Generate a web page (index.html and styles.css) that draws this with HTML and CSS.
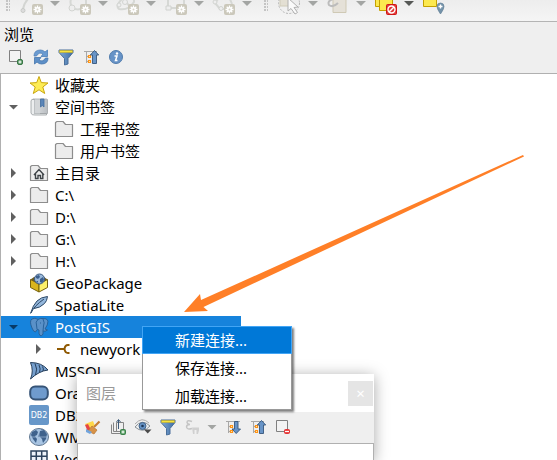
FILE: index.html
```html
<!DOCTYPE html>
<html lang="zh-CN">
<head>
<meta charset="utf-8">
<title>浏览</title>
<link rel="stylesheet" href="styles.css">
</head>
<body>
<svg class="defs" aria-hidden="true">
  <defs>
    <linearGradient id="blue" x1="0" x2="1"><stop offset="0" stop-color="#7fa9d6"/><stop offset="1" stop-color="#3f6da3"/></linearGradient>
    <linearGradient id="silver" x1="0" x2="1"><stop offset="0" stop-color="#e2e4e6"/><stop offset="1" stop-color="#b9bdc1"/></linearGradient>
  </defs>
  <symbol id="gear" viewBox="0 0 11 11"><rect width="11" height="11" rx="2" fill="#cbc8bb"/><path d="M5.500 1.500v8M1.500 5.500h8M2.700 2.700l5.600 5.600M8.300 2.700L2.700 8.300" stroke="#fff" stroke-width="1.300"/><circle cx="5.500" cy="5.500" r="2.500" fill="#fff"/><circle cx="5.500" cy="5.500" r="1" fill="#d8d5ca"/></symbol>
  <symbol id="folder" viewBox="0 0 20 20"><path d="M1.500 17.500V3.500L3 2.500h6l2.500 3H18.500v12z" fill="#ececec" stroke="#8d8d8d" stroke-width="1.200" stroke-linejoin="round"/></symbol>
  <symbol id="funnel" viewBox="0 0 20 20"><path d="M3 3h14v2.500l-5 6V17l-3.500 1v-6.500L3 5.500z" fill="url(#blue)" stroke="#4a6f9b"/><path d="M3.500 3.500h13v2h-13z" fill="#f7e43c" stroke="#c2ad2c" stroke-width=".6"/></symbol>
  <symbol id="collapse" viewBox="0 0 20 20"><path d="M3 4.500h13M5.500 4v12M6 9.500h2M6 14.500h2" fill="none" stroke="#a8a8a8"/><path d="M7.500 8.500h2v2h-2zM7.500 13.500h2v2h-2z" fill="#fff3d0" stroke="#ff9415" stroke-width="1.200"/><path d="M13.500 3.500L17.700 8H15.500V16.500h-4V8H9.300z" fill="#6894c7" stroke="#35567c" stroke-width=".9"/></symbol>
  <symbol id="expand" viewBox="0 0 20 20"><path d="M3 4.500h14M5.500 4v12M6 9.500h2M6 14.500h2" fill="none" stroke="#a8a8a8"/><path d="M7.500 8.500h2v2h-2zM7.500 13.500h2v2h-2z" fill="#fff3d0" stroke="#ff9415" stroke-width="1.200"/><path d="M11.500 4.500h3.500v7.500h2.500L13.200 16.500L9 12h2.500z" fill="#6894c7" stroke="#35567c" stroke-width=".9"/></symbol>
</svg>

<main class="app">
  <div class="top-tools" role="toolbar" aria-label="数字化">
    <span class="grip"></span>
    <button class="tool" aria-label="曲线"><svg class="tool-icon" viewBox="0 0 24 21"><path d="M8-1Q4 3 3 9" fill="none" stroke="#d3d5d2" stroke-width="2"/><circle cx="3" cy="10.500" r="2" fill="#ddd" stroke="#c8cac7"/><use href="#gear" x="12" y="4" width="11" height="11"/></svg><i class="caret"></i></button>
    <button class="tool" aria-label="圆"><svg class="tool-icon" viewBox="0 0 24 21"><path d="M3-1Q1 6 7 9Q14 11 18 4V-1" fill="none" stroke="#d6d8d5" stroke-width="2"/><circle cx="4" cy="8" r="3" fill="#eee" stroke="#d2d4d1"/><use href="#gear" x="12" y="4" width="11" height="11"/></svg><i class="caret"></i></button>
    <button class="tool" aria-label="椭圆"><svg class="tool-icon" viewBox="0 0 24 21"><path d="M6-1Q-1 6 3 9Q12 11 18 2V-1M8-1L14 7" fill="none" stroke="#d6d8d5" stroke-width="2"/><circle cx="3" cy="5" r="2" fill="#eee" stroke="#d2d4d1"/><circle cx="9" cy="2" r="2.500" fill="#eee" stroke="#d2d4d1"/><use href="#gear" x="12" y="4" width="11" height="11"/></svg><i class="caret"></i></button>
    <button class="tool" aria-label="矩形"><svg class="tool-icon" viewBox="0 0 24 21"><path d="M4-1V8H14M20-1V4" fill="none" stroke="#d6d8d5" stroke-width="2"/><path d="M2 6h5v4H2z" fill="#eee" stroke="#d0d2cf"/><use href="#gear" x="12" y="4" width="11" height="11"/></svg><i class="caret"></i></button>
    <button class="tool" aria-label="多边形"><svg class="tool-icon" viewBox="0 0 24 21"><path d="M6-1L3 3L8 9H14M18-1L20 4" fill="none" stroke="#d6d8d5" stroke-width="2"/><circle cx="3" cy="2" r="2" fill="#eee" stroke="#d2d4d1"/><circle cx="9" cy="8.500" r="2" fill="#eee" stroke="#d2d4d1"/><use href="#gear" x="12" y="4" width="11" height="11"/></svg><i class="caret"></i></button>
    <span class="grip grip-inner"></span>
    <button class="tool" aria-label="选择要素"><svg class="tool-icon" viewBox="0 0 24 21"><path d="M2-1H12V6H2z" fill="#e3dfd3" stroke="#d0ccb9"/><circle cx="11" cy="3" r="10.500" fill="none" stroke="#b5b5b5" stroke-dasharray="2 1.500"/><path d="M10-2V11l3-2.500L17 14l2.500-1.500L16 7.500l4-.5z" fill="#fafafa" stroke="#b0b0b0"/></svg><i class="caret"></i></button>
    <button class="tool" aria-label="按值选择"><svg class="tool-icon" viewBox="0 0 24 21"><path d="M7-1H20V12.500H7z" fill="#e5e1d8" stroke="#cfc9b5"/><path d="M7-1Q1 1 3 5Q7 8 12 3" fill="none" stroke="#bcbcbc" stroke-width="2"/></svg><i class="caret"></i></button>
    <button class="tool" aria-label="取消选择"><svg class="tool-icon" viewBox="0 0 24 21"><path d="M1.500-1H13V6.500H1.500z" fill="#fce94f" stroke="#c4a000"/><path d="M5.500-1H18.500V10.500H5.500z" fill="#fce94f" stroke="#c4a000"/><rect x="12.500" y="4.500" width="10" height="10" rx="1" fill="#e23a3a" stroke="#d01616"/><circle cx="17.500" cy="9.500" r="3.500" fill="none" stroke="#fff" stroke-width="1.400"/><path d="M15 12L20 7" stroke="#fff" stroke-width="1.400"/></svg><i class="caret caret-dark"></i></button>
    <button class="tool" aria-label="按位置选择"><svg class="tool-icon" viewBox="0 0 24 21"><path d="M1.500-1H14.500V6.500H1.500z" fill="#fce94f" stroke="#c4a000"/><path d="M18.500 14Q15 9 15 6.500A3.500 3.500 0 0 1 22 6.500Q22 9 18.500 14z" fill="#7493aa" stroke="#668399" stroke-width=".7"/><path d="M18.500 4.500v4M16.500 6.500h4" stroke="#fff" stroke-width="1.400"/></svg></button>
  </div>

  <section class="browser">
    <h1 class="dock-title">浏览</h1>
    <div class="dock-tools" role="toolbar" aria-label="浏览">
      <button aria-label="添加选中图层"><svg viewBox="0 0 20 20"><path d="M3.500 3.500h11v11h-11z" fill="#f3f3f3" stroke="#808080"/><rect x="11.500" y="12.500" width="5" height="5" rx="1.500" fill="#5a9a66" stroke="#397546"/><path d="M14 13.500v3M12.500 15h3" stroke="#fff"/></svg></button>
      <button aria-label="刷新"><svg viewBox="0 0 20 20"><path d="M3 9Q3 3 9.500 3Q12 3 14 5L16.500 3v6.500H10L12 7Q8 4.500 5.500 9z" fill="#6a9bd1" stroke="#4e7fb7" stroke-width=".8"/><path d="M17 11Q17 17 10.500 17Q8 17 6 15L3.500 17v-6.500H10L8 13Q12 15.500 14.500 11z" fill="#5d8fc7" stroke="#4475ac" stroke-width=".8"/></svg></button>
      <button aria-label="过滤浏览器"><svg><use href="#funnel"/></svg></button>
      <button aria-label="全部折叠"><svg><use href="#collapse"/></svg></button>
      <button aria-label="属性"><svg viewBox="0 0 20 20"><circle cx="10" cy="10" r="6.500" fill="#6793c7" stroke="#517cad"/><circle cx="11" cy="6.500" r="1.200" fill="#fff"/><path d="M8.500 9H11L9.500 13.500H11.500" fill="none" stroke="#fff" stroke-width="1.500"/></svg></button>
    </div>

    <ul class="tree">
      <li class="row"><span class="toggle"></span><svg class="icon" viewBox="0 0 20 20"><path d="M10 1.500L12.300 7.600L19 8L13.800 12L15.700 18.500L10 14.800L4.300 18.500L6.200 12L1 8L7.700 7.600z" fill="#fdec55" stroke="#c9a60e" stroke-linejoin="round"/></svg><span class="label">收藏夹</span></li>
      <li class="row"><button class="toggle open" aria-label="折叠"></button><svg class="icon" viewBox="0 0 20 20"><path d="M4 2H17.500Q19 2 18.500 4V16.500H4z" fill="url(#silver)" stroke="#a3a7aa" stroke-width=".8"/><path d="M5.500 2.500Q2 1.500 2 4V16Q2.500 18.500 6 18H17.500V16.500H5.500z" fill="#eceeef" stroke="#989ca0" stroke-width=".8"/><path d="M5.500 3H11V16.500H5.500z" fill="#d3d6d8"/><path d="M11.500 2H15V10L13.300 8.500L11.500 10z" fill="#5c86b8" stroke="#416c9f" stroke-width=".8"/></svg><span class="label">空间书签</span></li>
      <li class="row child"><span class="toggle"></span><svg class="icon"><use href="#folder"/></svg><span class="label">工程书签</span></li>
      <li class="row child"><span class="toggle"></span><svg class="icon"><use href="#folder"/></svg><span class="label">用户书签</span></li>
      <li class="row"><button class="toggle" aria-label="展开"></button><svg class="icon" viewBox="0 0 20 20"><use href="#folder"/><path d="M5 12L10 6.500L15 12M6.500 11V15.500H9V12.500H11.500V15.500H13.800V11" fill="none" stroke="#3e4347" stroke-width="1.400"/></svg><span class="label">主目录</span></li>
      <li class="row"><button class="toggle" aria-label="展开"></button><svg class="icon"><use href="#folder"/></svg><span class="label">C:\</span></li>
      <li class="row"><button class="toggle" aria-label="展开"></button><svg class="icon"><use href="#folder"/></svg><span class="label">D:\</span></li>
      <li class="row"><button class="toggle" aria-label="展开"></button><svg class="icon"><use href="#folder"/></svg><span class="label">G:\</span></li>
      <li class="row"><button class="toggle" aria-label="展开"></button><svg class="icon"><use href="#folder"/></svg><span class="label">H:\</span></li>
      <li class="row"><span class="toggle"></span><svg class="icon" viewBox="0 0 20 20"><path d="M1.500 6.500L10 11V19L1.500 14.500z" fill="#d9b51e" stroke="#77620d"/><path d="M18.500 6.500L10 11V19L18.500 14.500z" fill="#fdf06a" stroke="#77620d"/><path d="M1.500 6.500L5 4h10l3.500 2.500L10 11z" fill="#6d5b20"/><circle cx="10.500" cy="6" r="5" fill="#9bb9da" stroke="#3b5a80"/><path d="M7 3l3-1 1 2-2 2-2-1zM11 6l3-2 1 3-2 3-2-1zM7 8l2 0 0 2z" fill="#3b5f8d"/></svg><span class="label">GeoPackage</span></li>
      <li class="row"><span class="toggle"></span><svg class="icon" viewBox="0 0 20 20"><path d="M1.500 18.500Q4 10 8 6Q12 2 18.500 1.500Q18 6 15.500 8.500Q11 13 5 13.500" fill="#94b7dc" stroke="#2c4765"/><path d="M2 18Q5 11 15 4" fill="none" stroke="#2c4765"/></svg><span class="label">SpatiaLite</span></li>
      <li class="row selected"><button class="toggle open" aria-label="折叠"></button><svg class="icon" viewBox="0 0 20 20"><path d="M3 2Q6 0 9 2.500Q11 1 14 1.500Q18 1 19 4Q19 8 16 12L18.500 13Q16 15 14 14V17Q13 19.500 11 18.500Q9.500 17 10 13L8 12.500L6.500 15Q4.500 15 3 11Q0 4 3 2z" fill="#5a91c8" stroke="#28629b"/><path d="M9 2.500Q6 5 7.500 8L8 12M14 2Q16 6 14.500 9L14 14M11 6h1" fill="none" stroke="#28629b"/></svg><span class="label">PostGIS</span></li>
      <li class="row child"><button class="toggle" aria-label="展开"></button><svg class="icon" viewBox="0 0 20 20"><path d="M3 10H10M15.500 6H14Q11 6 10.500 10Q11 14 14 14H15.500" fill="none" stroke="#8f5902" stroke-width="2"/></svg><span class="label">newyork</span></li>
      <li class="row"><span class="toggle"></span><svg class="icon" viewBox="0 0 20 20"><path d="M1.500 1.500Q13 1.500 19 9Q10 10 1.500 18Q5 10 1.500 1.500z" fill="#769fcd" stroke="#263f5c"/><path d="M6 2.500Q9 8 6.500 14M10 4Q12 8 10.500 11.500M13.500 5.500Q15 8 14 10" fill="none" stroke="#263f5c"/></svg><span class="label">MSSQL</span></li>
      <li class="row"><span class="toggle"></span><svg class="icon" viewBox="0 0 20 20"><rect x="1.200" y="3.500" width="17.600" height="13" rx="5" fill="#6f9bcd" stroke="#365477" stroke-width="2"/></svg><span class="label">Oracle</span></li>
      <li class="row"><span class="toggle"></span><svg class="icon" viewBox="0 0 20 20"><rect width="20" height="20" rx="2" fill="#6797c9"/><text x="10" y="13" text-anchor="middle" class="db2">DB2</text></svg><span class="label">DB2</span></li>
      <li class="row"><span class="toggle"></span><svg class="icon" viewBox="0 0 20 20"><ellipse cx="10" cy="10" rx="9.500" ry="8.500" fill="#a9c5e3" stroke="#5f7690"/><path d="M3 5l4-2 2 2-1 3-2 1 2 3-1 4-3-4-2-4zM11 4l4-1 3 4-1 5-3 4-1-4-2-2-2 0zM12 2l2 0-1 1z" fill="#3f628c"/><path d="M1 10h18M10 2v16" stroke="#a3bdd8" stroke-width=".7"/></svg><span class="label">WMS/WMTS</span></li>
      <li class="row"><span class="toggle"></span><svg class="icon" viewBox="0 0 20 20"><path d="M2 2h16v16H2zM7.300 2v16M12.700 2v16M2 7.300h16M2 12.700h16" fill="#eef3fa" stroke="#2d435d" stroke-width="1.500"/></svg><span class="label">Vector Tiles</span></li>
    </ul>
  </section>

  <svg class="pointer" viewBox="0 0 342 160" aria-hidden="true"><path d="M0 157L16 139L17 145L339 0L340 1.500L19.500 152L24 156z" fill="#ff7f27"/></svg>

  <section class="layers">
    <header class="layers-head"><h2>图层</h2><button class="close" aria-label="关闭">×</button></header>
    <div class="dock-tools layers-tools" role="toolbar" aria-label="图层">
      <button aria-label="样式"><svg viewBox="0 0 20 20"><path d="M2 7l8-3 2 5-7 3z" fill="#ffd84a"/><path d="M2 8l3-1 3 6-3 2z" fill="#e54545"/><path d="M5 14l6 3 3-4-5-4z" fill="#d89247" stroke="#b67632" stroke-width=".7"/><path d="M3 12l6 3-2 2-4-2z" fill="#72a4dc"/><path d="M11 10L16.500 4.500" stroke="#c47e35" stroke-width="2.200"/></svg></button>
      <button aria-label="添加组"><svg viewBox="0 0 20 20"><path d="M3.500 7.500v9H12M5.500 5.500v9H12M8.500 5.500h7v9h-7z" fill="none" stroke="#858585"/><path d="M8.500 5L10.500 2.500l2 2.500M10.500 3v9" fill="none" stroke="#3f5c7c"/><rect x="12.500" y="12.500" width="5" height="5" rx="1" fill="#58a064" stroke="#3b804a"/><path d="M15 13.500v3M13.500 15h3" stroke="#fff"/></svg></button>
      <button aria-label="管理地图主题"><svg viewBox="0 0 20 20"><path d="M2 10Q9 1 17 9Q10 17 2 10z" fill="#eef0f0" stroke="#8a9298"/><circle cx="9.500" cy="9" r="3.500" fill="#6592c4" stroke="#44658b"/><circle cx="9.500" cy="9" r="1.300" fill="#1d3655"/><path d="M2 7Q9-1 16 6" fill="none" stroke="#aaa"/><path d="M11 12.500h7.500L14.700 16.500z" fill="#4b4b4b"/></svg></button>
      <button aria-label="过滤图例"><svg><use href="#funnel"/></svg></button>
      <button class="menu-tool" aria-label="按表达式过滤"><svg viewBox="0 0 20 20"><path d="M9 4.500Q4 2.500 4 5.500Q4.500 7.500 7 7.500Q3.500 7.500 3.500 10Q4 13 9 11.500" fill="none" stroke="#c4c4c4" stroke-width="1.400"/><path d="M9 10.500h7v3l-1 3.500h-1.500v-4h-2v4H10z" fill="#d0d0d0"/></svg><i class="caret"></i></button>
      <button aria-label="全部展开"><svg><use href="#expand"/></svg></button>
      <button aria-label="全部折叠"><svg><use href="#collapse"/></svg></button>
      <button aria-label="移除图层"><svg viewBox="0 0 20 20"><path d="M3.500 3.500h11v11h-11z" fill="#f3f3f3" stroke="#808080"/><rect x="11.500" y="12.500" width="5" height="4" rx="1" fill="#ef4b4b" stroke="#df3636"/><path d="M12 14.500h4" stroke="#fff"/></svg></button>
    </div>
    <div class="layers-body"></div>
  </section>

  <menu class="context">
    <li><button class="active">新建连接...</button></li>
    <li><button>保存连接...</button></li>
    <li><button>加载连接...</button></li>
  </menu>
</main>
</body>
</html>
```
FILE: styles.css
```css
* { box-sizing: border-box; }

body {
  margin: 0;
  font: 15px/22px "Noto Sans", "Noto Sans CJK SC", sans-serif;
  color: #000;
  background: #efefef;
}

button {
  padding: 0;
  border: 0;
  background: none;
  font: inherit;
  color: inherit;
}

h1, h2 { margin: 0; font-size: 15px; font-weight: 400; }

.defs { position: absolute; width: 0; height: 0; }

.app {
  position: relative;
  display: flex;
  flex-direction: column;
  height: 100vh;
  overflow: hidden;
}

/* main toolbar */
.top-tools {
  display: flex;
  flex: none;
  height: 22px;
  padding-left: 6px;
  border-bottom: 1px solid #b4b4b4;
  background: linear-gradient(#ededed, #f5f5f5);
}

.grip {
  width: 4px;
  height: 12px;
  margin-right: 10px;
  background: radial-gradient(circle at 1px 1px, #c4c4c4 1px, transparent 1px) 0 0 / 3px 3px;
}

.grip-inner { margin-left: 4px; }

.tool {
  display: flex;
  flex: none;
  gap: 6px;
  width: 48px;
}

.tool-icon { width: 24px; height: 21px; }

.caret {
  width: 10px;
  height: 5px;
  margin-top: 1px;
  background: #a3a5a3;
  clip-path: polygon(0 0, 100% 0, 50% 100%);
}

.caret-dark { background: #565856; }

/* browser dock */
.browser {
  display: flex;
  flex: 1;
  flex-direction: column;
  min-height: 0;
}

.dock-title { padding: 1px 4px 0; line-height: 22px; }

.dock-tools {
  display: flex;
  flex: none;
  align-items: center;
  gap: 5px;
  height: 28px;
  padding: 0 6px 4px;
}

.dock-tools button { display: flex; flex: none; }

.dock-tools svg { width: 20px; height: 20px; }

.tree {
  flex: 1;
  min-height: 0;
  margin: 0;
  padding: 0;
  overflow: hidden;
  list-style: none;
  border: solid #b0b0b0;
  border-width: 1px 0 0 1px;
  background: #fff;
}

.row {
  display: flex;
  align-items: center;
  width: 240px;
  height: 22px;
}

.child { padding-left: 25px; }

.selected { background: #1683dc; color: #fff; }

.toggle {
  display: flex;
  flex: none;
  align-items: center;
  justify-content: center;
  width: 25px;
  height: 22px;
}

button.toggle::before {
  content: "";
  width: 5px;
  height: 10px;
  background: #606060;
  clip-path: polygon(0 0, 100% 50%, 0 100%);
}

button.open::before {
  width: 10px;
  height: 5px;
  clip-path: polygon(0 0, 100% 0, 50% 100%);
}

.selected button.toggle::before { background: #073a68; }

.icon {
  flex: none;
  width: 20px;
  height: 20px;
  margin: 0 6px 0 3px;
}

.label { white-space: nowrap; }

.db2 { font: 8px "DejaVu Sans", sans-serif; fill: #fff; }

/* annotation arrow over the tree */
.pointer {
  position: absolute;
  top: 155px;
  left: 184px;
  width: 342px;
  height: 160px;
}

/* floating layers window */
.layers {
  position: absolute;
  top: 374px;
  bottom: 0;
  left: 77px;
  width: 297px;
  display: flex;
  flex-direction: column;
  background: #fff;
  box-shadow: 0 2px 14px rgba(0, 0, 0, .35);
}

.layers-head {
  display: flex;
  flex: none;
  align-items: center;
  justify-content: space-between;
  height: 38px;
  padding: 0 1px 0 9px;
  color: #999;
}

.close {
  width: 25px;
  height: 25px;
  background: #e5e5e5;
  color: #fff;
}

.layers-tools { height: 31px; padding: 0 6px 1px; background: #efefef; }

.menu-tool { gap: 4px; margin-right: 1px; }

.menu-tool .caret { align-self: center; margin: 0; }

.layers-body {
  flex: 1;
  border: solid #b0b0b0;
  border-width: 1px 1px 0;
}

/* context menu */
.context {
  position: absolute;
  top: 326px;
  left: 142px;
  width: 150px;
  margin: 0;
  padding: 0;
  list-style: none;
  background: #fff;
  box-shadow: inset 0 0 0 1px #999, 2px 2px 2px rgba(0, 0, 0, .5);
}

.context button {
  display: block;
  width: 100%;
  height: 28px;
  padding-left: 32px;
  border: 1px solid transparent;
  text-align: left;
}

.context .active {
  border-color: #42a5f5;
  background: #0078d7;
  color: #fff;
}
```
